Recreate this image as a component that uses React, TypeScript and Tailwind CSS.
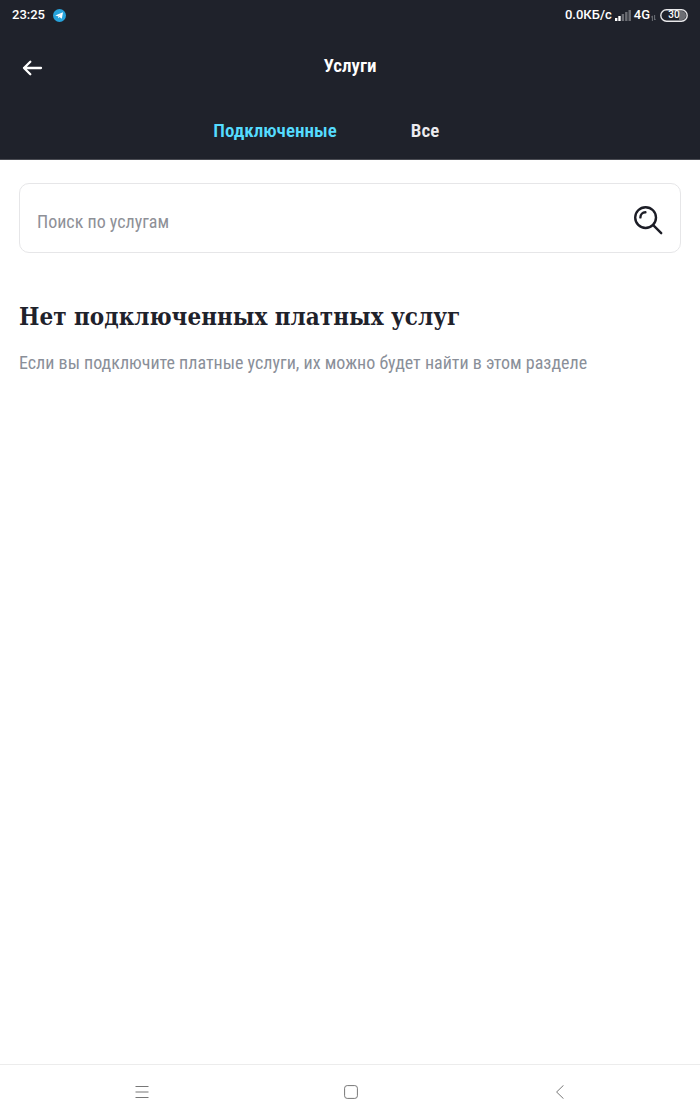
import { useState } from "react";

const tabs = [
  { id: "connected", label: "Подключенные" },
  { id: "all", label: "Все" },
];

function TelegramIcon() {
  return (
    <svg width="13" height="13" viewBox="0 0 13 13" aria-hidden="true">
      <circle cx="6.5" cy="6.5" r="6.5" fill="#27a3dc" />
      <path d="M2.3 6.5 10 3.3 8.8 9.7 6.5 8.1 5.3 9.3 5 7.3Z" fill="#fff" />
      <path d="M5 7.3 8.2 5 5.8 7.7 5.3 9.3Z" fill="#b5def2" />
    </svg>
  );
}

function SignalIcon() {
  return (
    <svg width="16" height="12" viewBox="0 0 16 12" aria-hidden="true">
      <rect x="0" y="9" width="2.4" height="3" fill="#fff" />
      <rect x="3.3" y="7" width="2.4" height="5" fill="#fff" />
      <rect x="6.7" y="5" width="2.4" height="7" fill="#6b6d73" />
      <rect x="10.1" y="3" width="2.4" height="9" fill="#6b6d73" />
      <rect x="13.5" y="1" width="2.4" height="11" fill="#6b6d73" />
    </svg>
  );
}

function DataArrowsIcon() {
  return (
    <svg width="5" height="6" viewBox="0 0 5 6" fill="none" stroke="#777a80" strokeWidth="0.9" aria-hidden="true">
      <path d="M1.4 6V1L0.2 2.2M3.6 0v5l1.2-1.2" />
    </svg>
  );
}

function BatteryIcon() {
  return (
    <svg width="28" height="13" viewBox="0 0 28 13" aria-hidden="true">
      <path d="M19 2h2.5a4.5 4.5 0 0 1 0 9H19Z" fill="#6b6d73" />
      <rect x=".8" y=".8" width="26.4" height="11.4" rx="5.7" fill="none" stroke="#e8e8ea" strokeWidth="1.4" />
    </svg>
  );
}

function StatusBar() {
  return (
    <div className="flex h-[30px] items-center justify-between px-3 font-[Roboto,sans-serif] text-[13px] font-medium text-white">
      <div className="flex items-center gap-2">
        <span>23:25</span>
        <TelegramIcon />
      </div>
      <div className="flex items-center gap-[3px]">
        <span>0.0КБ/с</span>
        <SignalIcon />
        <span>4G</span>
        <span className="-ml-0.5 pt-1.5">
          <DataArrowsIcon />
        </span>
        <span className="ml-px grid place-items-center *:col-start-1 *:row-start-1">
          <BatteryIcon />
          <span className="text-[10px] leading-none">30</span>
        </span>
      </div>
    </div>
  );
}

function SearchIcon() {
  return (
    <svg width="30" height="30" viewBox="0 0 30 30" fill="none" stroke="#1c1d26" strokeWidth="2.4" strokeLinecap="round" aria-hidden="true">
      <circle cx="12.6" cy="12.6" r="10.4" />
      <path d="M20.2 20.2 28.2 28.2" />
      <path d="M7.4 12.4A5.2 5.2 0 0 1 12.4 7.2" />
    </svg>
  );
}

function BottomNav() {
  return (
    <nav className="grid h-14 grid-cols-3 items-center border-t border-[#ececec] pr-9 pb-0.5 pl-[38px] text-[#777]">
      <button type="button" aria-label="Меню" className="flex justify-center">
        <svg width="14" height="14" viewBox="0 0 14 14" stroke="currentColor" fill="none">
          <path d="M.5 1.5h13M.5 7h13M.5 12.5h13" />
        </svg>
      </button>
      <button type="button" aria-label="Домой" className="flex justify-center">
        <svg width="14" height="14" viewBox="0 0 14 14" stroke="currentColor" fill="none">
          <rect x=".6" y=".6" width="12.8" height="12.8" rx="2.6" />
        </svg>
      </button>
      <button type="button" aria-label="Назад" className="flex justify-center">
        <svg width="14" height="14" viewBox="0 0 14 14" stroke="currentColor" fill="none">
          <path d="M10.5.3 3.6 7l6.9 6.7" />
        </svg>
      </button>
    </nav>
  );
}

export default function App() {
  const [active, setActive] = useState("connected");
  const [query, setQuery] = useState("");

  return (
    <div className="flex min-h-screen flex-col bg-white font-['Roboto_Condensed',sans-serif] text-[#1f222b]">
      <header className="border-b border-[#4a4c53] bg-[#1f222b]">
        <StatusBar />
        <div className="grid h-[73px] grid-cols-[1fr_auto_1fr] items-center px-[22px]">
          <button type="button" aria-label="Назад" className="w-fit pt-0.5 text-white">
            <svg width="21" height="16" viewBox="0 0 21 16" fill="none" stroke="currentColor" strokeWidth="2.3" strokeLinecap="round" strokeLinejoin="round">
              <path d="M19 8H2M8.3 1.7 2 8l6.3 6.3" />
            </svg>
          </button>
          <h1 className="text-[19px] font-semibold text-white">Услуги</h1>
        </div>
        <div className="flex h-14 justify-center">
          {tabs.map((tab) => (
            <button
              key={tab.id}
              type="button"
              onClick={() => setActive(tab.id)}
              className={`w-[150px] text-[19px] font-semibold ${
                active === tab.id ? "text-[#55dcff]" : "text-[#ececf0]"
              }`}
            >
              {tab.label}
            </button>
          ))}
        </div>
      </header>

      <main className="flex-1 px-[19px] pt-[23px]">
        <label className="flex h-[70px] items-center rounded-[10px] border border-[#e6e6e8] px-[17px] pt-1">
          <input
            type="text"
            aria-label="Поиск по услугам"
            placeholder="Поиск по услугам"
            value={query}
            onChange={(e) => setQuery(e.target.value)}
            className="min-w-0 flex-1 pt-0.5 text-[18px] outline-none placeholder:text-[#8e9097]"
          />
          <SearchIcon />
        </label>

        <h2 className="mt-[46px] font-['DejaVu_Serif_Condensed','DejaVu_Serif',serif] text-[24px] leading-9 font-bold">
          Нет подключенных платных услуг
        </h2>
        <p className="mt-4 text-[18px] leading-6 text-[#8a8f99]">
          Если вы подключите платные услуги, их можно будет найти в этом разделе
        </p>
      </main>

      <BottomNav />
    </div>
  );
}
